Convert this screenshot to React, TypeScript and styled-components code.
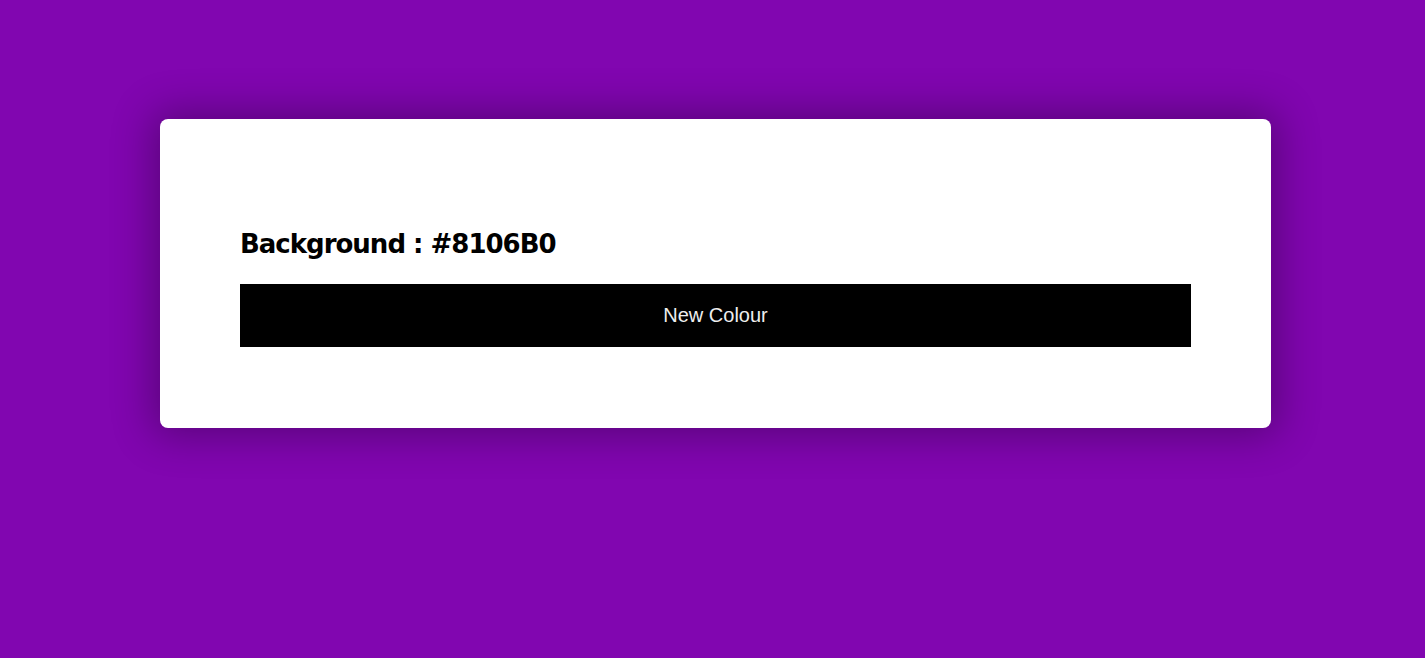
import React, { useState } from 'react'
import styled, { createGlobalStyle } from 'styled-components'

const GlobalStyle = createGlobalStyle`
  html, body {
    margin: 0;
    padding: 0;
  }
  body {
    background: #8106b0;
    min-height: 658px;
  }
`

const Page = styled.div<{ bg: string }>`
  min-height: 658px;
  background: ${(p) => p.bg};
  padding-top: 119px;
  box-sizing: border-box;
`

const Card = styled.div`
  width: 1111px;
  margin-left: 160px;
  box-sizing: border-box;
  background: #fff;
  border-radius: 8px;
  padding: 109px 80px 81px;
  box-shadow: 0 0 40px 8px rgba(0, 0, 0, 0.3);
`

const Title = styled.h2`
  margin: 0 0 24px;
  font-family: 'DejaVu Sans', sans-serif;
  font-weight: bold;
  font-size: 26px;
  line-height: 32px;
  color: #000;
  letter-spacing: -1px;
`

const Button = styled.button`
  display: block;
  width: 100%;
  height: 63px;
  border: none;
  background: #000;
  color: #eee;
  font-family: 'Liberation Sans', Arial, sans-serif;
  font-size: 20px;
  cursor: pointer;
`

const App: React.FC = () => {
  const [bg, setBg] = useState('#8106B0')

  const randomColour = () => {
    const hex = Math.floor(Math.random() * 0xffffff)
      .toString(16)
      .padStart(6, '0')
      .toUpperCase()
    setBg(`#${hex}`)
  }

  return (
    <Page bg={bg}>
      <GlobalStyle />
      <Card>
        <Title>Background : {bg}</Title>
        <Button onClick={randomColour}>New Colour</Button>
      </Card>
    </Page>
  )
}

export default App
